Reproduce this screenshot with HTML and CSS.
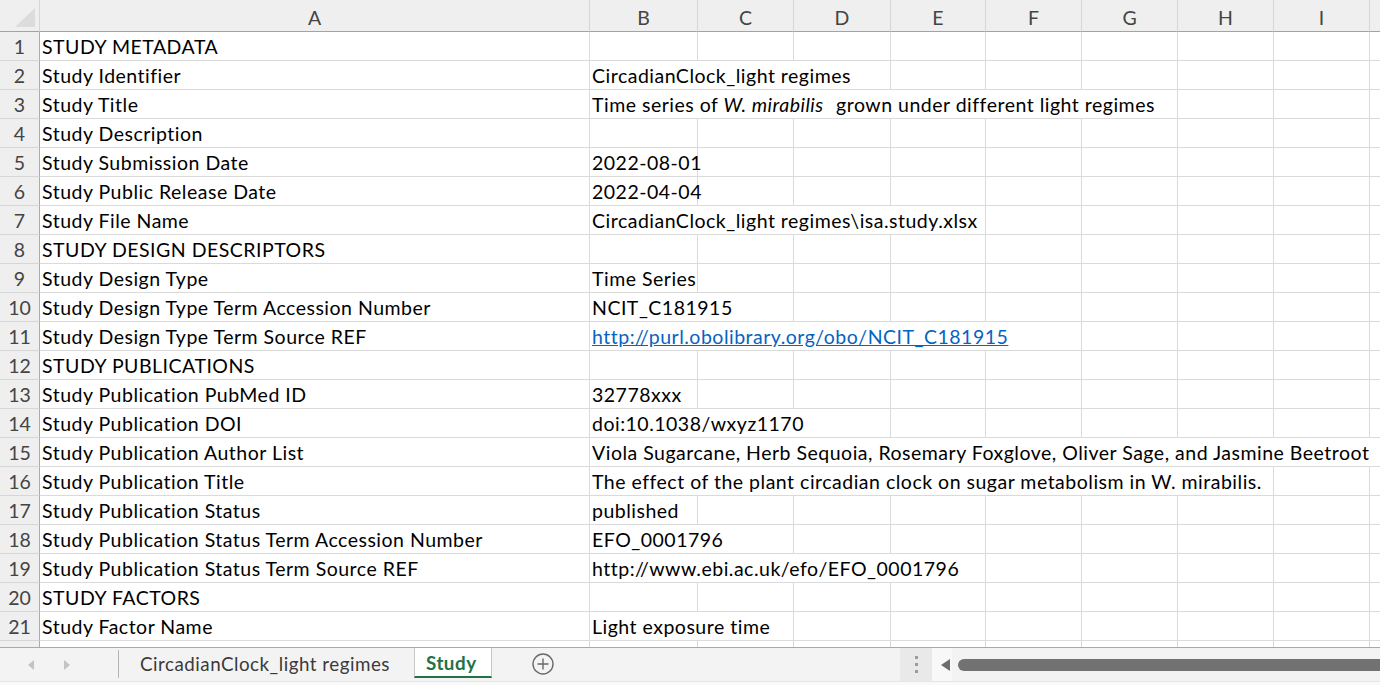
FILE: index.html
```html
<!DOCTYPE html>
<html>
<head>
<meta charset="utf-8">
<title>Study</title>
<link rel="stylesheet" href="styles.css">
</head>
<body>
<div class="app">
  <div class="sheet">
    <div class="row head">
      <div class="corner"><svg width="39" height="31" viewBox="0 0 39 31"><polygon points="15,27 35,27 35,8" fill="#dcdcdc"/></svg></div>
      <div class="ch">A</div><div class="ch">B</div><div class="ch">C</div><div class="ch">D</div><div class="ch">E</div><div class="ch">F</div><div class="ch">G</div><div class="ch">H</div><div class="ch">I</div><div class="ch"></div>
    </div>

    <div class="row"><div class="rn">1</div><div class="c">STUDY METADATA</div><div class="c"></div><div class="c"></div><div class="c"></div><div class="c"></div><div class="c"></div><div class="c"></div><div class="c"></div><div class="c"></div><div class="c"></div></div>
    <div class="row"><div class="rn">2</div><div class="c">Study Identifier</div><div class="c s3">CircadianClock_light regimes</div><div class="c"></div><div class="c"></div><div class="c"></div><div class="c"></div><div class="c"></div><div class="c"></div></div>
    <div class="row"><div class="rn">3</div><div class="c">Study Title</div><div class="c s6">Time series of <i>W. mirabilis</i> grown under different light regimes</div><div class="c"></div><div class="c"></div><div class="c"></div></div>
    <div class="row"><div class="rn">4</div><div class="c">Study Description</div><div class="c"></div><div class="c"></div><div class="c"></div><div class="c"></div><div class="c"></div><div class="c"></div><div class="c"></div><div class="c"></div><div class="c"></div></div>
    <div class="row"><div class="rn">5</div><div class="c">Study Submission Date</div><div class="c">2022-08-01</div><div class="c"></div><div class="c"></div><div class="c"></div><div class="c"></div><div class="c"></div><div class="c"></div><div class="c"></div><div class="c"></div></div>
    <div class="row"><div class="rn">6</div><div class="c">Study Public Release Date</div><div class="c">2022-04-04</div><div class="c"></div><div class="c"></div><div class="c"></div><div class="c"></div><div class="c"></div><div class="c"></div><div class="c"></div><div class="c"></div></div>
    <div class="row"><div class="rn">7</div><div class="c">Study File Name</div><div class="c s4">CircadianClock_light regimes\isa.study.xlsx</div><div class="c"></div><div class="c"></div><div class="c"></div><div class="c"></div><div class="c"></div></div>
    <div class="row"><div class="rn">8</div><div class="c">STUDY DESIGN DESCRIPTORS</div><div class="c"></div><div class="c"></div><div class="c"></div><div class="c"></div><div class="c"></div><div class="c"></div><div class="c"></div><div class="c"></div><div class="c"></div></div>
    <div class="row"><div class="rn">9</div><div class="c">Study Design Type</div><div class="c">Time Series</div><div class="c"></div><div class="c"></div><div class="c"></div><div class="c"></div><div class="c"></div><div class="c"></div><div class="c"></div><div class="c"></div></div>
    <div class="row"><div class="rn">10</div><div class="c">Study Design Type Term Accession Number</div><div class="c s2">NCIT_C181915</div><div class="c"></div><div class="c"></div><div class="c"></div><div class="c"></div><div class="c"></div><div class="c"></div><div class="c"></div></div>
    <div class="row"><div class="rn">11</div><div class="c">Study Design Type Term Source REF</div><div class="c s5"><a class="link" href="#">http://purl.obolibrary.org/obo/NCIT_C181915</a></div><div class="c"></div><div class="c"></div><div class="c"></div><div class="c"></div></div>
    <div class="row"><div class="rn">12</div><div class="c">STUDY PUBLICATIONS</div><div class="c"></div><div class="c"></div><div class="c"></div><div class="c"></div><div class="c"></div><div class="c"></div><div class="c"></div><div class="c"></div><div class="c"></div></div>
    <div class="row"><div class="rn">13</div><div class="c">Study Publication PubMed ID</div><div class="c">32778xxx</div><div class="c"></div><div class="c"></div><div class="c"></div><div class="c"></div><div class="c"></div><div class="c"></div><div class="c"></div><div class="c"></div></div>
    <div class="row"><div class="rn">14</div><div class="c">Study Publication DOI</div><div class="c s3">doi:10.1038/wxyz1170</div><div class="c"></div><div class="c"></div><div class="c"></div><div class="c"></div><div class="c"></div><div class="c"></div></div>
    <div class="row"><div class="rn">15</div><div class="c">Study Publication Author List</div><div class="c s9">Viola Sugarcane, Herb Sequoia, Rosemary Foxglove, Oliver Sage, and Jasmine Beetroot</div></div>
    <div class="row"><div class="rn">16</div><div class="c">Study Publication Title</div><div class="c s7">The effect of the plant circadian clock on sugar metabolism in W. mirabilis.</div><div class="c"></div><div class="c"></div></div>
    <div class="row"><div class="rn">17</div><div class="c">Study Publication Status</div><div class="c">published</div><div class="c"></div><div class="c"></div><div class="c"></div><div class="c"></div><div class="c"></div><div class="c"></div><div class="c"></div><div class="c"></div></div>
    <div class="row"><div class="rn">18</div><div class="c">Study Publication Status Term Accession Number</div><div class="c s2">EFO_0001796</div><div class="c"></div><div class="c"></div><div class="c"></div><div class="c"></div><div class="c"></div><div class="c"></div><div class="c"></div></div>
    <div class="row"><div class="rn">19</div><div class="c">Study Publication Status Term Source REF</div><div class="c s4">http://www.ebi.ac.uk/efo/EFO_0001796</div><div class="c"></div><div class="c"></div><div class="c"></div><div class="c"></div><div class="c"></div></div>
    <div class="row"><div class="rn">20</div><div class="c">STUDY FACTORS</div><div class="c"></div><div class="c"></div><div class="c"></div><div class="c"></div><div class="c"></div><div class="c"></div><div class="c"></div><div class="c"></div><div class="c"></div></div>
    <div class="row"><div class="rn">21</div><div class="c">Study Factor Name</div><div class="c s2">Light exposure time</div><div class="c"></div><div class="c"></div><div class="c"></div><div class="c"></div><div class="c"></div><div class="c"></div><div class="c"></div></div>
    <div class="row"><div class="rn"></div><div class="c"></div><div class="c"></div><div class="c"></div><div class="c"></div><div class="c"></div><div class="c"></div><div class="c"></div><div class="c"></div><div class="c"></div><div class="c"></div></div>
  </div>

  <div class="tabbar">
    <div class="nav">
      <svg width="6" height="10" viewBox="0 0 6 10"><polygon points="6,0 6,10 0,5" fill="#c3c3c3"/></svg>
      <svg width="6" height="10" viewBox="0 0 6 10"><polygon points="0,0 0,10 6,5" fill="#c3c3c3"/></svg>
    </div>
    <div class="sep"></div>
    <div class="tab">CircadianClock_light regimes</div>
    <div class="tab active">Study</div>
    <div class="add"><svg width="22" height="22" viewBox="0 0 22 22"><circle cx="11" cy="11" r="10" fill="none" stroke="#6a6a6a" stroke-width="1.4"/><path d="M11 5.5v11M5.5 11h11" stroke="#6a6a6a" stroke-width="1.4"/></svg></div>
    <div class="spacer"></div>
    <div class="grip"><span></span><span></span><span></span></div>
    <div class="hscroll">
      <svg class="larrow" width="9" height="12" viewBox="0 0 9 12"><polygon points="9,0 9,12 0,6" fill="#6c6c6c"/></svg>
      <div class="thumb"></div>
    </div>
  </div>
  <div class="status"></div>
</div>
</body>
</html>
```

FILE: styles.css
```css
html, body {
  margin: 0;
  padding: 0;
  background: #ffffff;
}

body {
  width: 1380px;
  height: 685px;
  overflow: hidden;
  font-family: "Lato", "Liberation Sans", sans-serif;
  font-size: 19.5px;
  letter-spacing: 0.5px;
  color: #000;
}

.app {
  display: flex;
  flex-direction: column;
  height: 685px;
}

.sheet {
  flex: 0 0 647px;
  height: 647px;
  overflow: hidden;
}

.row {
  display: grid;
  grid-template-columns: 40px 550px 108px 96px 97px 95px 96px 96px 96px 96px 1fr;
  height: 29px;
}

.row.head {
  height: 32px;
  background: #efefef;
}

.corner {
  box-sizing: border-box;
  border-right: 1px solid #d6d6d6;
  border-bottom: 1px solid #a3a3a3;
  height: 32px;
}

.corner svg {
  display: block;
}

.ch {
  box-sizing: border-box;
  height: 32px;
  border-right: 1px solid #d6d6d6;
  border-bottom: 1px solid #a3a3a3;
  text-align: center;
  color: #444;
  line-height: 28px;
  padding-top: 4px;
  letter-spacing: 0;
}

.ch:last-child {
  border-right: none;
}

.rn {
  box-sizing: border-box;
  height: 29px;
  background: #efefef;
  border-right: 1px solid #ababab;
  border-bottom: 1px solid #d6d6d6;
  text-align: center;
  color: #444;
  line-height: 30px;
  letter-spacing: 0;
}

.c {
  box-sizing: border-box;
  height: 29px;
  border-right: 1px solid #dadada;
  border-bottom: 1px solid #dadada;
  line-height: 30px;
  padding-left: 2px;
  white-space: nowrap;
  overflow: visible;
}

.c:last-child {
  border-right: none;
}

.c i {
  font-style: italic;
  padding-right: 7px;
}

.s2 { grid-column: span 2; }
.s3 { grid-column: span 3; }
.s4 { grid-column: span 4; }
.s5 { grid-column: span 5; }
.s6 { grid-column: span 6; }
.s7 { grid-column: span 7; }
.s9 { grid-column: span 9; }

.link {
  color: #0563c1;
  text-decoration: underline;
}

.tabbar {
  flex: 0 0 34px;
  box-sizing: border-box;
  height: 34px;
  border-top: 1px solid #a9a9a9;
  background: #f3f3f3;
  display: flex;
  align-items: stretch;
}

.nav {
  width: 118px;
  display: flex;
  align-items: center;
  gap: 30px;
  padding-left: 28px;
  box-sizing: border-box;
}

.nav svg {
  display: block;
  margin-top: 1px;
}

.sep {
  width: 1px;
  margin: 2px 0 3px;
  background: #b4b4b4;
}

.tab {
  box-sizing: border-box;
  height: 30px;
  padding-left: 21px;
  width: 295px;
  color: #3a3a3a;
  font-size: 18.8px;
  line-height: 31px;
}

.tab.active {
  width: 78px;
  padding-left: 11px;
  background: #ffffff;
  border-left: 1px solid #c6c6c6;
  border-right: 1px solid #c6c6c6;
  border-bottom: 2px solid #217346;
  color: #217346;
  font-weight: bold;
  line-height: 29px;
}

.add {
  display: flex;
  align-items: center;
  padding-left: 40px;
}

.add svg {
  display: block;
  margin-top: -1px;
}

.spacer {
  flex: 1;
}

.grip {
  width: 32px;
  background: #e9e9e9;
  display: flex;
  flex-direction: column;
  align-items: center;
  justify-content: center;
  gap: 4px;
}

.grip span {
  display: block;
  width: 3px;
  height: 3px;
  background: #9c9c9c;
}

.hscroll {
  width: 448px;
  display: flex;
  align-items: center;
  padding-left: 9px;
  box-sizing: border-box;
  background: linear-gradient(to right, #f8f8f8 0, #f8f8f8 20px, #f3f3f3 20px);
}

.larrow {
  display: block;
  margin-right: 8px;
}

.thumb {
  flex: 1;
  height: 12px;
  background: #727272;
  border-radius: 6px 0 0 6px;
}

.status {
  flex: 0 0 4px;
  box-sizing: border-box;
  border-top: 1px solid #e6e6e6;
  background: #f9f9f9;
}
```
